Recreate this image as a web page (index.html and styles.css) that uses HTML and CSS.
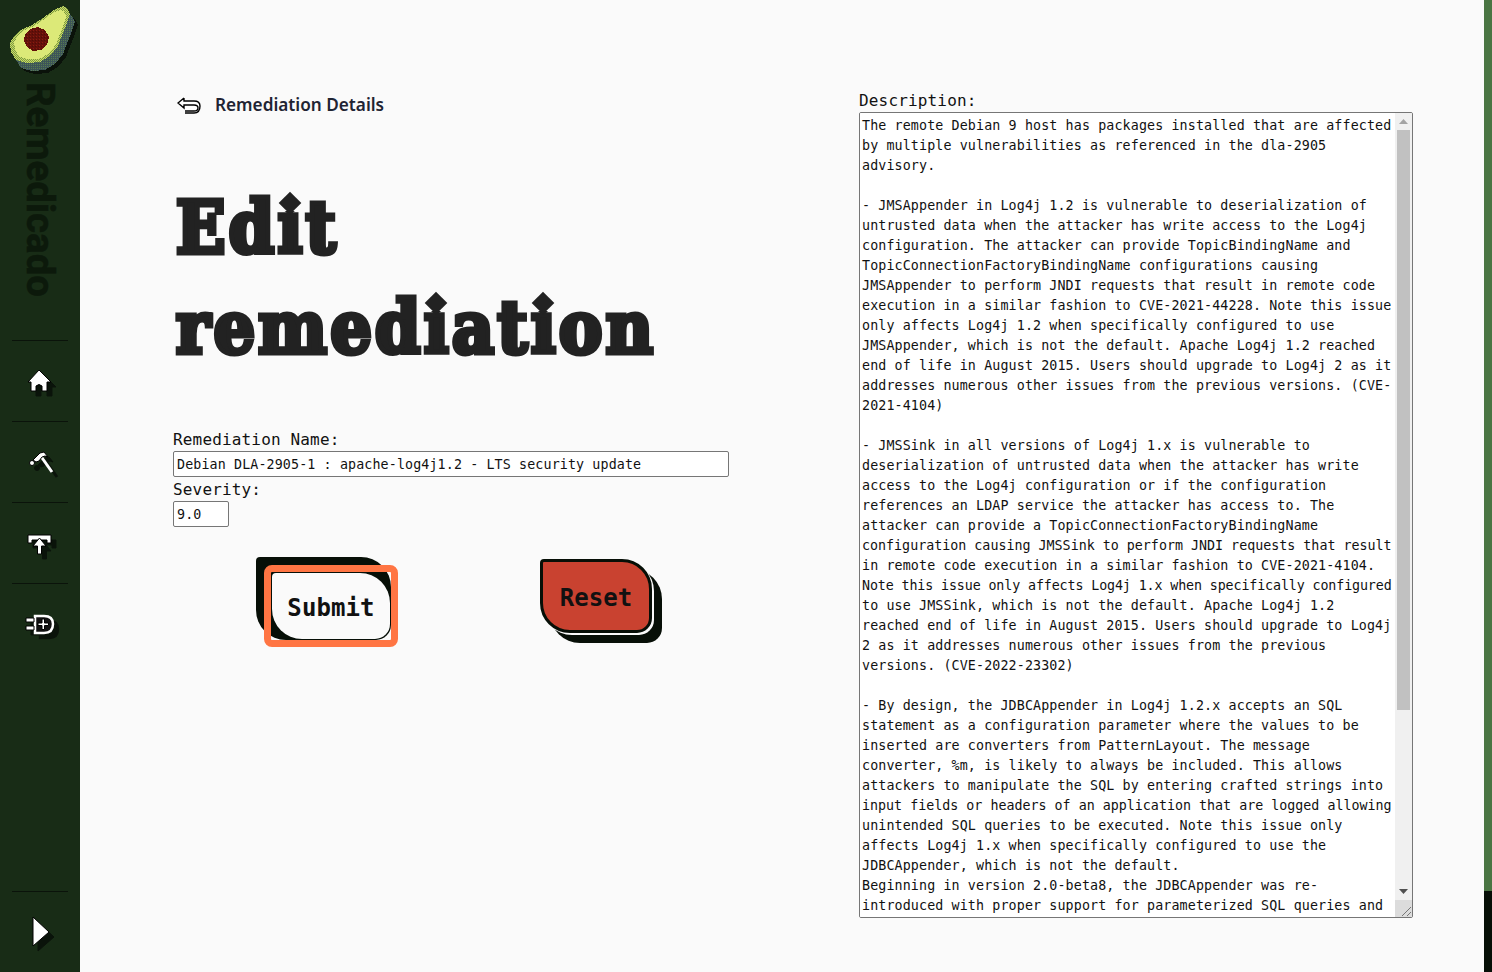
FILE: index.html
```html
<!DOCTYPE html>
<html lang="en">
<head>
<meta charset="utf-8">
<title>Edit remediation</title>
<link rel="stylesheet" href="styles.css">
</head>
<body>
<div class="page">
  <aside class="sidebar">
    <svg class="logo" width="80" height="78" viewBox="0 0 80 78" shape-rendering="crispEdges">
      <defs>
        <pattern id="rim" width="2" height="2" patternUnits="userSpaceOnUse"><rect width="2" height="2" fill="#c9da68"/><rect width="1" height="1" fill="#7f9c42"/><rect x="1" y="1" width="1" height="1" fill="#7f9c42"/></pattern>
        <pattern id="skin" width="2" height="2" patternUnits="userSpaceOnUse"><rect width="2" height="2" fill="#3d5558"/><rect width="1" height="1" fill="#587a50"/></pattern>
        <pattern id="pit" width="3" height="3" patternUnits="userSpaceOnUse"><rect width="3" height="3" fill="#64100a"/><rect width="1" height="1" fill="#8a1c10"/><rect x="2" y="1" width="1" height="1" fill="#4e0c06"/></pattern>
        <path id="avo" d="M63 6 L67 8 L70 14 L67 23 L63 33 L58 46 L50 56 L40 62 L27 63 L16 60 L11 52 L10 43 L14 36 L21 30 L32 25 L43 18 L54 10 Z"/>
      </defs>
      <use href="#avo" x="8" y="11" fill="#0a120a"/>
      <use href="#avo" x="5" y="8" fill="url(#skin)"/>
      <use href="#avo" fill="url(#rim)"/>
      <use href="#avo" fill="#dce978" transform="translate(5.5 4.5) scale(.87)"/>
      <path d="M30 29 L38 27 L45 30 L49 37 L47 45 L41 50 L33 51 L27 47 L24 41 L25 34 Z" fill="url(#pit)"/>
    </svg>
    <div class="brand">Remedicado</div>
    <nav class="nav">
      <a class="nav-item"><svg class="nav-icon" width="40" height="40" viewBox="0 0 40 40"><path class="ico" d="M19 9 L31 21 H27 V30 H22 V25 Q19 22 16 25 V30 H11 V21 H8 Z"/></svg></a>
      <a class="nav-item"><svg class="nav-icon" width="40" height="40" viewBox="0 0 40 40"><path class="ico-line" d="M20 13 L32 30"/><path class="ico" d="M13 18 L20 11 L24 10 L28 15 L25 14 L22 15 L19 19 L16 20 Z"/><circle class="ico" cx="12" cy="21" r="2.500"/></svg></a>
      <a class="nav-item"><svg class="nav-icon" width="40" height="40" viewBox="0 0 40 40"><path class="ico" d="M8 12 H31 V20 H27 V17 H12 V20 H8 Z"/><path class="ico" d="M19.500 15 L26 23 H21.500 V31 H17.500 V23 H13 Z"/></svg></a>
      <a class="nav-item"><svg class="nav-icon" width="40" height="40" viewBox="0 0 40 40"><path class="ico-hollow" d="M15 12 H24 Q33 12 33 20 Q33 29 24 29 H15 Z"/><path class="ico" d="M6 14 H14 V18 H6 Z M6 22 H14 V26 H6 Z M22 15 H24.500 V19 H28.500 V21.500 H24.500 V25.500 H22 V21.500 H18 V19 H22 Z"/></svg></a>
    </nav>
    <div class="spacer"></div>
    <a class="nav-item nav-last"><svg class="nav-icon" width="40" height="40" viewBox="0 0 40 40"><path class="ico" d="M13 5 L29 20 L13 34 Z"/></svg></a>
  </aside>

  <main class="main">
    <section class="left">
      <div class="crumb">
        <svg width="24" height="18" viewBox="0 0 24 18"><path class="back" d="M7 2 L1 7 L7 12 V9 H17 Q21 9 21 12 Q21 15 17 15 H8 M7 2 V5 H17 Q23 5 23 10 Q23 17 17 17 H8"/></svg>
        <span class="crumb-text">Remediation Details</span>
      </div>
      <h1 class="title">Ed<span class="dotted">i</span>t<br>remed<span class="dotted">i</span>at<span class="dotted">i</span>on</h1>
      <form class="form">
        <label class="field-label" for="name">Remediation Name:</label>
        <input class="field name" id="name" type="text" value="Debian DLA-2905-1 : apache-log4j1.2 - LTS security update">
        <label class="field-label sev" for="sev">Severity:</label>
        <input class="field sev-input" id="sev" type="text" value="9.0">
        <div class="actions">
          <button class="btn btn-submit" type="button"><span class="face">Submit</span></button>
          <button class="btn btn-reset" type="button">Reset</button>
        </div>
      </form>
    </section>
    <section class="right">
      <div class="field-label">Description:</div>
      <div class="desc-box">
        <div class="desc">The remote Debian 9 host has packages installed that are affected
by multiple vulnerabilities as referenced in the dla-2905
advisory.

- JMSAppender in Log4j 1.2 is vulnerable to deserialization of
untrusted data when the attacker has write access to the Log4j
configuration. The attacker can provide TopicBindingName and
TopicConnectionFactoryBindingName configurations causing
JMSAppender to perform JNDI requests that result in remote code
execution in a similar fashion to CVE-2021-44228. Note this issue
only affects Log4j 1.2 when specifically configured to use
JMSAppender, which is not the default. Apache Log4j 1.2 reached
end of life in August 2015. Users should upgrade to Log4j 2 as it
addresses numerous other issues from the previous versions. (CVE-
2021-4104)

- JMSSink in all versions of Log4j 1.x is vulnerable to
deserialization of untrusted data when the attacker has write
access to the Log4j configuration or if the configuration
references an LDAP service the attacker has access to. The
attacker can provide a TopicConnectionFactoryBindingName
<span class="fit66">configuration causing JMSSink to perform JNDI requests that result</span>
in remote code execution in a similar fashion to CVE-2021-4104.
<span class="fit67">Note this issue only affects Log4j 1.x when specifically configured</span>
to use JMSSink, which is not the default. Apache Log4j 1.2
reached end of life in August 2015. Users should upgrade to Log4j
2 as it addresses numerous other issues from the previous
versions. (CVE-2022-23302)

- By design, the JDBCAppender in Log4j 1.2.x accepts an SQL
statement as a configuration parameter where the values to be
inserted are converters from PatternLayout. The message
converter, %m, is likely to always be included. This allows
attackers to manipulate the SQL by entering crafted strings into
<span class="fit66">input fields or headers of an application that are logged allowing</span>
unintended SQL queries to be executed. Note this issue only
affects Log4j 1.x when specifically configured to use the
JDBCAppender, which is not the default.
Beginning in version 2.0-beta8, the JDBCAppender was re-
introduced with proper support for parameterized SQL queries and</div>
        <div class="scrollbar" aria-hidden="true">
          <div class="sb-btn"><svg width="9" height="5" viewBox="0 0 9 5"><path d="M4.500 0L9 5H0Z" fill="#a3a3a3"/></svg></div>
          <div class="sb-thumb"></div>
          <div class="sb-track"></div>
          <div class="sb-btn"><svg width="9" height="5" viewBox="0 0 9 5"><path d="M0 0H9L4.500 5Z" fill="#505050"/></svg></div>
          <div class="sb-corner"><svg width="17" height="17" viewBox="0 0 17 17"><path d="M7 16L16 7M12 16L16 12" stroke="#777" fill="none"/></svg></div>
        </div>
      </div>
    </section>
  </main>
  <div class="edge"><div class="edge-green"></div><div class="edge-dark"></div></div>
</div>
</body>
</html>
```
FILE: styles.css
```css
* { box-sizing: border-box; }
html, body { margin: 0; height: 100%; overflow: hidden; }
body { background: #fafafa; color: #111; font-family: "DejaVu Sans Mono", monospace; }
.page { display: flex; height: 972px; width: 1492px; }

.sidebar { width: 80px; flex: none; background: #182c16; display: flex; flex-direction: column; align-items: center; }
.logo { display: block; flex: none; }
.brand { writing-mode: vertical-rl; font-family: Roboto, sans-serif; font-weight: 700; font-size: 38.4px; line-height: 38px; height: 262px; padding-top: 4px; color: #0c190b; -webkit-text-stroke: .6px #0c190b; }
.nav { width: 100%; display: flex; flex-direction: column; }
.nav-item { height: 81px; margin: 0 12px; border-top: 1px solid #0a130a; display: flex; align-items: center; justify-content: center; }
.nav-last { width: 56px; }
.spacer { flex: 1; }
.nav-icon { display: block; overflow: visible; filter: drop-shadow(5px 5px 0 #0a130a); }
.ico { fill: #fff; stroke: #000; stroke-width: 1; }
.ico-line { fill: none; stroke: #fff; stroke-width: 3; }
.ico-hollow { fill: #111; stroke: #fff; stroke-width: 2.5; }

.main { flex: 1; display: flex; min-width: 0; }
.left { width: 779px; padding: 96px 0 0 93px; }
.crumb { display: flex; align-items: center; gap: 14px; height: 18px; font-family: "Noto Sans", sans-serif; font-weight: 600; font-size: 17.2px; color: #1f2433; margin-left: 4px; }
.crumb-text { margin-top: -2px; }
.back { fill: #fff; stroke: #000; stroke-width: 1.4; }
.title { margin: 64px 0 0 3px; font-family: "DejaVu Serif", serif; font-stretch: condensed; font-weight: 700; font-size: 72px; line-height: 100px; letter-spacing: 3.5px; color: #222; -webkit-text-stroke: 5px #222; height: 200px; }
.dotted { display: inline-block; position: relative; }
.dotted::before { content: ""; position: absolute; left: calc(50% - 14px); top: 4px; width: 24px; height: 29px; background: #fafafa; }
.dotted::after { content: ""; position: absolute; left: calc(50% - 9.500px); top: 17px; width: 16px; height: 16px; background: #222; transform: rotate(45deg); }
.form { margin-top: 49px; display: flex; flex-direction: column; align-items: flex-start; }
.field-label { font-size: 16px; line-height: 23px; padding-top: 1px; letter-spacing: .16px; display: block; }
.field { display: block; height: 26px; padding: 1px 3px; border: 1px solid #767676; border-radius: 2px; background: #fff; color: #111; font-family: inherit; font-size: 13.33px; letter-spacing: .12px; outline: none; }
.name { width: 556px; }
.sev-input { width: 56px; }
.actions { display: flex; margin-top: 46px; margin-left: 99px; }
.btn { font-family: inherit; font-weight: 700; font-size: 24px; letter-spacing: .1px; padding: 0; color: #111; cursor: pointer; }
.btn-submit { position: relative; z-index: 0; width: 118px; height: 66px; background: transparent; border: 0; }
.btn-submit::before { content: ""; position: absolute; z-index: -1; top: -16px; left: -16px; right: -1px; bottom: -1px; background: #070f07; border-radius: 4px 30px 15px 30px; }
.btn-submit::after { content: ""; position: absolute; top: -8px; left: -8px; right: -8px; bottom: -8px; border: 7px solid #ff7543; border-radius: 8px; }
.face { display: flex; align-items: center; justify-content: center; height: 100%; padding-top: 4px; background: #fafafa; border-radius: 4px 30px 15px 30px; }
.btn-reset { width: 112px; height: 74px; padding-top: 3px; background: #c94230; border: 3px solid #070f07; border-radius: 4px 30px 15px 30px; margin-left: 150px; margin-top: -14px; box-shadow: 2px 2px 0 #fafafa, 10px 10px 0 #070f07; }

.right { width: 554px; padding-top: 88px; }
.desc-box { display: flex; width: 554px; height: 806px; border: 1px solid #767676; border-radius: 2px; background: #fff; overflow: hidden; }
.desc { flex: 1; min-width: 0; height: 100%; padding: 3px 2px 0; overflow: hidden; white-space: pre; background: #fff; color: #111; font-size: 13.33px; line-height: 20px; letter-spacing: .12px; }
.fit66 { letter-spacing: 0; }
.fit67 { letter-spacing: -.12px; }
.scrollbar { width: 17px; flex: none; display: flex; flex-direction: column; background: #f0f0f0; }
.sb-btn { height: 17px; flex: none; display: flex; align-items: center; justify-content: center; }
.sb-thumb { height: 580px; flex: none; margin: 0 2px; background: #c1c1c1; }
.sb-track { flex: 1; }
.sb-corner { height: 17px; flex: none; background: #dcdcdc; }
.sb-corner svg { display: block; }

.edge { width: 8px; flex: none; display: flex; flex-direction: column; }
.edge-green { height: 891px; background: #4a7543; }
.edge-dark { flex: 1; background: #070f07; }
```
